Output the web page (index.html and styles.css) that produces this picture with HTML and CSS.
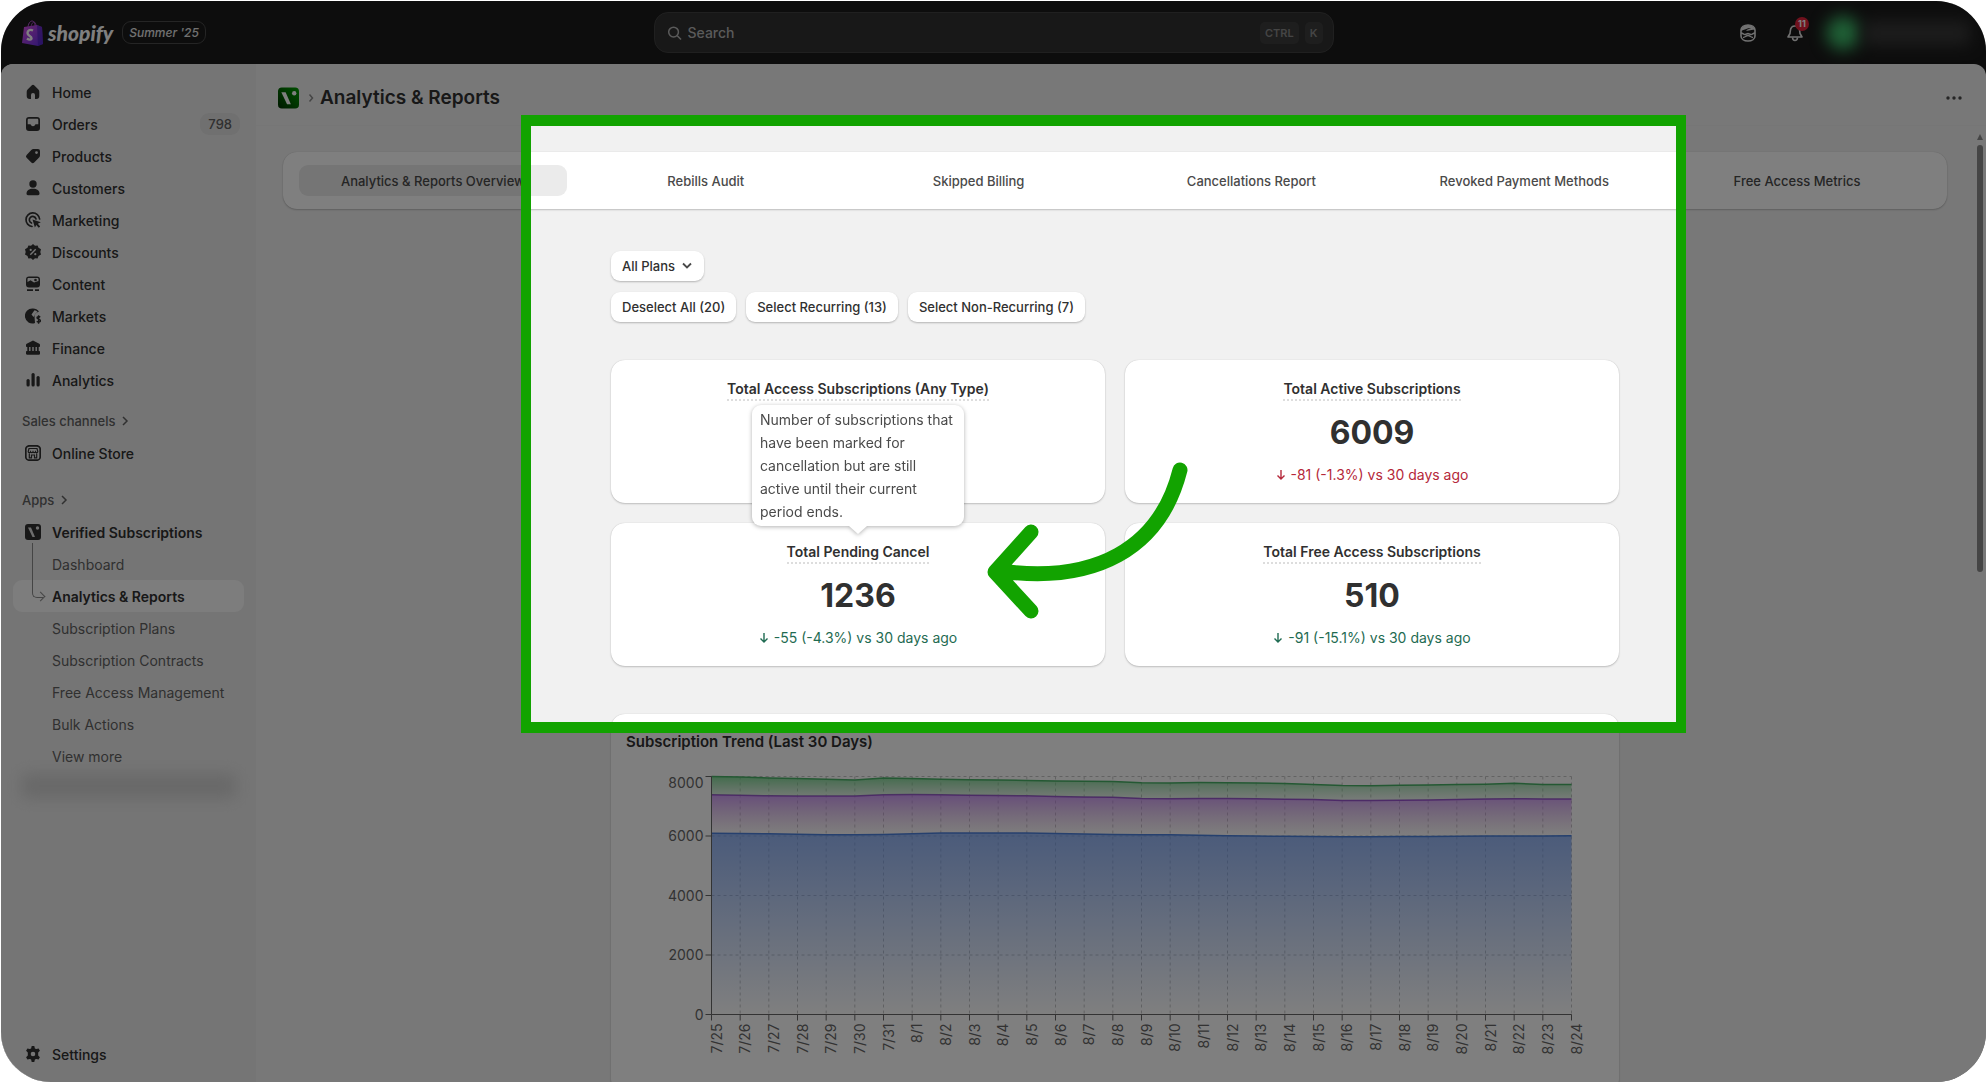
FILE: index.html
```html
<!DOCTYPE html>
<html lang="en">
<head>
  <meta charset="UTF-8">
  <meta name="viewport" content="width=device-width, initial-scale=1.0">
  <title>Analytics &amp; Reports</title>
  <link rel="stylesheet" href="styles.css">
</head>
<body>
  <div class="screen">
    <header class="topbar">
      <div class="brand">
        <svg class="bag" viewBox="0 0 21 26" aria-hidden="true">
          <defs>
            <linearGradient id="bag-fill" x1="0" y1="0" x2="1" y2="1">
              <stop offset="0" stop-color="#d94fe0"/>
              <stop offset="1" stop-color="#5a2be0"/>
            </linearGradient>
          </defs>
          <path d="M6 8C6 4 8 1 10 1s3 2 3 6M9 8c0-4 2-6 3-6s2 2 2 4" fill="none" stroke="#b04fd0" stroke-width="1"/>
          <path d="M2 7l13-2 5 2 1 17-5 2L0 23z" fill="url(#bag-fill)"/>
          <path d="M15 5l5 2 1 17-5 2z" fill="#4a22b8" opacity=".6"/>
          <path d="M11 10.500c-3-1.500-5.500 0-5.500 2.500 0 3 4 3 4 5.300 0 1.700-2.500 1.700-4.500.2" fill="none" stroke="#fff" stroke-width="2.400"/>
        </svg>
        <span class="wordmark">shopify</span>
        <span class="edition">Summer '25</span>
      </div>
      <label class="search">
        <svg viewBox="0 0 16 16" aria-hidden="true"><circle cx="7" cy="7" r="5.200"/><path d="M11 11l4 4"/></svg>
        <input type="text" placeholder="Search" aria-label="Search">
        <kbd>CTRL</kbd>
        <kbd>K</kbd>
      </label>
      <div class="tools">
        <button class="tool" aria-label="Sidekick">
          <svg viewBox="0 0 18 18" aria-hidden="true">
            <path d="M2 6c0-3 3-5 7-5s7 2 7 5v6c0 3-3 5-7 5s-7-2-7-5z" fill="none" stroke="#e3e3e3" stroke-width="1.600"/>
            <path d="M2 6c1-4 4-5 7-5s6 1 7 5c-4-1-6 1.500-9 .5C9 5 11 4.500 12 4 8 4 5 6 2 7z" fill="#e3e3e3"/>
            <path d="M2 9c2 0 2.500 1.500 4 1.500S8 9.500 9 9.500s1.500 1 3 1S14 9 16 9M4 13.500c2 0 3-2 5-2s3 2 5 2" fill="none" stroke="#e3e3e3" stroke-width="1.500"/>
          </svg>
        </button>
        <button class="tool bell" aria-label="Alerts">
          <svg viewBox="0 0 18 18" aria-hidden="true">
            <path d="M9 2C6 2 4.500 4 4.300 7L4 9.500 2 13h14l-2-3.500L13.700 7C13.500 4 12 2 9 2z" fill="none" stroke="#e3e3e3" stroke-width="1.600" stroke-linejoin="round"/>
            <path d="M6.500 13.500c.3 4 4.700 4 5 0" fill="none" stroke="#e3e3e3" stroke-width="1.600"/>
          </svg>
          <span class="alert-count">11</span>
        </button>
        <span class="avatar"></span>
        <span class="account"></span>
      </div>
    </header>

    <div class="layout">
      <nav class="sidebar">
        <ul>
          <li><a class="row" href="#"><svg viewBox="0 0 16 16"><path d="M6.600 1.400a2 2 0 0 1 2.800 0l4 4.200c.6.600.9 1.300.9 2.100V12a3 3 0 0 1-3 3H10v-4a2 2 0 0 0-4 0v4H4.700a3 3 0 0 1-3-3V7.700c0-.8.3-1.500.9-2.100z"/></svg>Home</a></li>
          <li><a class="row" href="#"><svg viewBox="0 0 16 16"><path fill-rule="evenodd" d="M4 1h8a3 3 0 0 1 3 3v8a3 3 0 0 1-3 3H4a3 3 0 0 1-3-3V4a3 3 0 0 1 3-3zm0 1.700c-.8 0-1.300.5-1.300 1.300v4.300h2.200c.8 0 .9.500 1.400 1.100.8 1 2.600 1 3.400 0 .5-.6.600-1.100 1.400-1.100h2.200V4c0-.8-.5-1.300-1.300-1.300z"/></svg>Orders<span class="count">798</span></a></li>
          <li><a class="row" href="#"><svg viewBox="0 0 16 16"><path fill-rule="evenodd" d="M8.500 1H13a2 2 0 0 1 2 2v4.200c0 .8-.3 1.600-.9 2.200l-4.900 5a2 2 0 0 1-2.900 0L1.600 9.800a2 2 0 0 1 0-2.800L6.300 2C6.900 1.300 7.700 1 8.500 1zM11.500 6a1.400 1.400 0 1 0 0-2.800 1.400 1.400 0 0 0 0 2.800z"/></svg>Products</a></li>
          <li><a class="row" href="#"><svg viewBox="0 0 16 16"><circle cx="8" cy="4" r="3.700"/><path d="M1.500 13.500c0-3 2.500-4.700 6.500-4.700s6.500 1.700 6.500 4.700c0 1.200-.6 1.700-1.500 1.700H3c-.9 0-1.500-.5-1.500-1.700z"/></svg>Customers</a></li>
          <li><a class="row" href="#"><svg viewBox="0 0 16 16"><path d="M7 14.500A6.800 6.800 0 1 1 14.600 7M6.500 11A3.400 3.400 0 1 1 11 7" fill="none" stroke="#303030" stroke-width="1.700" stroke-linecap="round"/><path d="M7.500 7.500l8.300 2.700-3 1.500 2.400 2.800-1.500 1.300-2.400-2.800-1.400 2.500z"/></svg>Marketing</a></li>
          <li><a class="row" href="#"><svg viewBox="0 0 16 16"><path d="M8 0l2 1.700 2.600-.3.900 2.400L16 5.200 15.300 8l.7 2.600-2.500 1.500-.9 2.400-2.600-.3L8 16l-2-1.800-2.600.3-.9-2.400L0 10.600.7 8 0 5.200l2.500-1.400.9-2.400 2.600.3z"/><path d="M5.300 10.700l5.400-5.400" stroke="#ebebeb" stroke-width="1.400"/><circle cx="5.700" cy="5.900" r="1.100" fill="#ebebeb"/><circle cx="10.300" cy="10.200" r="1.100" fill="#ebebeb"/></svg>Discounts</a></li>
          <li><a class="row" href="#"><svg viewBox="0 0 16 16"><path fill-rule="evenodd" d="M4 .5h8a3 3 0 0 1 3 3v5a3 3 0 0 1-3 3H4a3 3 0 0 1-3-3v-5a3 3 0 0 1 3-3zM3.500 2C2.800 2 2.500 2.500 2.500 3v3l3-1.800L9 6.500 13.500 5V3.200c0-.7-.5-1.200-1.200-1.200z"/><circle cx="10.500" cy="4" r="1.300"/><path d="M2 13.200h6v1.700H2zM10 13.200h4v1.700h-4z"/></svg>Content</a></li>
          <li><a class="row" href="#"><svg viewBox="0 0 16 16"><path fill-rule="evenodd" d="M8 .5c2.500 0 4.500 1 6 3l-2 1c-1.500 1-2.500 2.200-2.500 4L10 15A7.500 7.500 0 1 1 8 .5zM9.500 2.200L6.500 6.500 8.500 9l2-3.500 2-1.700c-.8-.8-1.800-1.400-3-1.600z"/><path d="M15.200 9.200c-1-1-3.200-.8-3.200.6 0 1.800 3.400 1 3.400 2.900 0 1.500-2.500 1.700-3.600.5M13.600 7.300v8.500" fill="none" stroke="#303030" stroke-width="1.400"/></svg>Markets</a></li>
          <li><a class="row" href="#"><svg viewBox="0 0 16 16"><path d="M8 .5l6.300 3.200c.5.300.7.700.7 1.200v1c0 .6-.4 1-1 1H2c-.6 0-1-.4-1-1v-1c0-.5.2-.9.700-1.200zM2.300 7h1.800v4H2.300zM5.500 7h1.800v4H5.500zM8.700 7h1.800v4H8.700zM11.900 7h1.800v4h-1.800zM2 11h12c.6 0 1 .4 1 1v1.500c0 .8-.4 1.200-1 1.200H2c-.6 0-1-.4-1-1.200V12c0-.6.400-1 1-1z"/></svg>Finance</a></li>
          <li><a class="row" href="#"><svg viewBox="0 0 16 16"><rect x="1.500" y="7" width="3.200" height="7.500" rx="1.500"/><rect x="6.500" y="1" width="3.200" height="13.500" rx="1.500"/><rect x="11.500" y="4" width="3.200" height="10.500" rx="1.500"/></svg>Analytics</a></li>
        </ul>

        <a class="section" href="#">Sales channels<svg viewBox="0 0 8 10"><path d="M2 1l4 4-4 4"/></svg></a>
        <ul>
          <li><a class="row" href="#"><svg viewBox="0 0 16 16"><rect x=".8" y=".8" width="14.400" height="14.400" rx="3.500" fill="none" stroke="#303030" stroke-width="1.700"/><path d="M4 3.500h8l.8 3c0 1.500-1.800 1.500-2.300.3-.5 1.200-2 1.200-2.500 0-.5 1.200-2 1.200-2.500 0-.5 1.200-2.300 1.200-2.300-.3zM4.300 8.500v4.300h2.200V10h3v2.800h2.200V8.500" fill="none" stroke="#303030" stroke-width="1.200"/></svg>Online Store</a></li>
        </ul>

        <a class="section apps" href="#">Apps<svg viewBox="0 0 8 10"><path d="M2 1l4 4-4 4"/></svg></a>
        <a class="row strong" href="#"><svg viewBox="0 0 16 16"><rect width="16" height="16" rx="3"/><path d="M3 3.500h3L10 13H7.500z" fill="#ddd"/><circle cx="12.500" cy="4" r="1.700" fill="#ddd"/></svg>Verified Subscriptions</a>
        <ul class="sub">
          <li><a class="row" href="#">Dashboard</a></li>
          <li><a class="row current" href="#">Analytics &amp; Reports</a></li>
          <li><a class="row" href="#">Subscription Plans</a></li>
          <li><a class="row" href="#">Subscription Contracts</a></li>
          <li><a class="row" href="#">Free Access Management</a></li>
          <li><a class="row" href="#">Bulk Actions</a></li>
          <li><a class="row" href="#">View more</a></li>
          <li class="redacted"></li>
        </ul>
        <a class="row settings" href="#"><svg viewBox="0 0 16 16"><path fill-rule="evenodd" d="M6.700 0h2.600l.6 2.400 1.300.7 2.400-.7 1.300 2.300-1.700 1.800v3l1.700 1.800-1.300 2.300-2.400-.7-1.300.7L9.300 16H6.700l-.6-2.400-1.300-.7-2.400.7-1.300-2.300 1.700-1.800v-3L1.100 4.700l1.300-2.300 2.400.7 1.300-.7zM8 10.300a2.300 2.300 0 1 0 0-4.600 2.300 2.300 0 0 0 0 4.600z"/></svg>Settings</a>
      </nav>

      <main class="main">
        <div class="page-head">
          <svg class="app-icon" viewBox="0 0 22 22" aria-hidden="true">
            <defs><linearGradient id="app-fill" x1="0" y1="1" x2="1" y2="0"><stop offset="0" stop-color="#003000"/><stop offset="1" stop-color="#00a000"/></linearGradient></defs>
            <rect width="22" height="22" rx="4" fill="url(#app-fill)"/>
            <path d="M3.500 5h4.500l5.500 12.500h-4z" fill="#fff"/><circle cx="17" cy="6" r="2.300" fill="#fff"/>
          </svg>
          <svg class="crumb" viewBox="0 0 6 10" aria-hidden="true"><path d="M1.500 1.500L4.500 5l-3 3.500"/></svg>
          <h1>Analytics &amp; Reports</h1>
          <button class="more" aria-label="More actions"><svg viewBox="0 0 16 4"><circle cx="2" cy="2" r="1.700"/><circle cx="8" cy="2" r="1.700"/><circle cx="14" cy="2" r="1.700"/></svg></button>
        </div>

        <div class="scroller">
          <div class="scroll-content">
            <div class="tabs" role="tablist">
              <button class="tab selected" role="tab">Analytics &amp; Reports Overview</button>
              <button class="tab" role="tab">Rebills Audit</button>
              <button class="tab" role="tab">Skipped Billing</button>
              <button class="tab" role="tab">Cancellations Report</button>
              <button class="tab" role="tab">Revoked Payment Methods</button>
              <button class="tab" role="tab">Free Access Metrics</button>
            </div>

            <div class="report">
              <div class="filters">
                <button class="btn">All Plans<svg viewBox="0 0 12 8"><path d="M2 1.500l4 4 4-4"/></svg></button>
              </div>
              <div class="filters">
                <button class="btn">Deselect All (20)</button>
                <button class="btn">Select Recurring (13)</button>
                <button class="btn">Select Non-Recurring (7)</button>
              </div>

              <div class="metrics">
                <section class="card metric">
                  <h2>Total Access Subscriptions (Any Type)</h2>
                </section>
                <section class="card metric">
                  <h2>Total Active Subscriptions</h2>
                  <p class="value">6009</p>
                  <p class="delta bad"><svg viewBox="0 0 10 12"><path d="M5 1v9M1.500 6.500L5 10l3.500-3.500"/></svg>-81 (-1.3%) vs 30 days ago</p>
                </section>
                <section class="card metric">
                  <h2>Total Pending Cancel
                    <span class="tooltip" role="tooltip">Number of subscriptions that have been marked for cancellation but are still active until their current period ends.</span>
                  </h2>
                  <p class="value">1236</p>
                  <p class="delta good"><svg viewBox="0 0 10 12"><path d="M5 1v9M1.500 6.500L5 10l3.500-3.500"/></svg>-55 (-4.3%) vs 30 days ago</p>
                </section>
                <section class="card metric">
                  <h2>Total Free Access Subscriptions</h2>
                  <p class="value">510</p>
                  <p class="delta good"><svg viewBox="0 0 10 12"><path d="M5 1v9M1.500 6.500L5 10l3.500-3.500"/></svg>-91 (-15.1%) vs 30 days ago</p>
                </section>
              </div>

              <section class="card trend">
                <h2>Subscription Trend (Last 30 Days)</h2>
                <svg id="chart" viewBox="0 0 1008 340">
                  <defs>
                    <linearGradient id="fill-active" x1="0" y1="0" x2="0" y2="1"><stop offset="0" stop-color="#5d8ff0" stop-opacity=".65"/><stop offset="1" stop-color="#5d8ff0" stop-opacity="0"/></linearGradient>
                    <linearGradient id="fill-pending" x1="0" y1="0" x2="0" y2="1"><stop offset="0" stop-color="#b466f0" stop-opacity=".65"/><stop offset="1" stop-color="#c88fc8" stop-opacity="0"/></linearGradient>
                    <linearGradient id="fill-free" x1="0" y1="0" x2="0" y2="1"><stop offset="0" stop-color="#4fc76b" stop-opacity=".7"/><stop offset="1" stop-color="#7fc78f" stop-opacity=".1"/></linearGradient>
                  </defs>
                </svg>
              </section>
            </div>
          </div>
          <div class="scrollbar"><span class="up"></span><span class="thumb"></span></div>
        </div>
      </main>
    </div>

    <div class="spotlight"></div>
    <svg class="pointer" viewBox="0 0 210 160" aria-hidden="true">
      <path d="M200 11C180 90 115 125 20 112M51 73L15 113l36 39"/>
    </svg>
  </div>
  <script src="chart.js"></script>
</body>
</html>
```
FILE: styles.css
```css
* {
  box-sizing: border-box;
}
body {
  margin: 0;
  height: 100vh;
  padding: 1px 0 0 1px;
  overflow: hidden;
  background: #fff;
  color: #303030;
  font-family: Inter, "Liberation Sans", sans-serif;
  font-size: 14px;
}
h1, h2, p, ul {
  margin: 0;
  padding: 0;
}
ul {
  list-style: none;
}
a {
  color: inherit;
  text-decoration: none;
}
button {
  border: 0;
  background: none;
  color: inherit;
  font: inherit;
  padding: 0;
}
.screen {
  position: relative;
  display: flex;
  flex-direction: column;
  height: 100%;
  border-radius: 50px;
  overflow: hidden;
  background: #1a1a1a;
}

/* top bar */
.topbar {
  display: grid;
  grid-template-columns: 1fr 680px 1fr;
  align-items: center;
  height: 63px;
}
.brand {
  display: flex;
  align-items: center;
  padding-left: 21px;
}
.bag {
  width: 21px;
  height: 26px;
}
.wordmark {
  margin: 0 9px 0 5px;
  color: #fff;
  font: italic 900 21px/26px Lato, sans-serif;
}
.edition {
  padding: 0 6px;
  border: 1px solid #4a4a4a;
  border-radius: 9px;
  color: #e3e3e3;
  font-size: 12px;
  font-style: italic;
  font-weight: 500;
  line-height: 21px;
}
.search {
  display: flex;
  align-items: center;
  gap: 6px;
  height: 41px;
  padding: 0 10px 0 12px;
  border: 1px solid #414141;
  border-radius: 14px;
  background: #303030;
}
.search svg {
  width: 15px;
  height: 16px;
  fill: none;
  stroke: #b5b5b5;
  stroke-width: 1.6;
}
.search input {
  flex: 1;
  border: 0;
  padding: 0;
  background: none;
  color: #b5b5b5;
  font: 500 14px Inter, sans-serif;
}
.search input::placeholder {
  color: #b5b5b5;
}
.search kbd {
  padding: 0 5px;
  border-radius: 5px;
  background: #3d3d3d;
  color: #8a8a8a;
  font: 600 11px/22px Inter, sans-serif;
}
.tools {
  display: flex;
  align-items: center;
  justify-content: flex-end;
  padding-right: 16px;
}
.tool {
  position: relative;
  margin-right: 29px;
}
.tool.bell {
  margin-right: 22px;
}
.tool svg {
  display: block;
  width: 18px;
  height: 18px;
}
.alert-count {
  position: absolute;
  left: 9px;
  top: -7px;
  width: 14px;
  border-radius: 7px;
  background: #e0233a;
  color: #fff;
  font-size: 9px;
  font-weight: 700;
  line-height: 14px;
}
.avatar {
  width: 34px;
  height: 34px;
  margin-right: 4px;
  background: #3fc06c;
  border-radius: 17px;
  filter: blur(8px);
}
.account {
  width: 106px;
  height: 24px;
  background: #3a3a3a;
  filter: blur(8px);
}

/* sidebar */
.layout {
  display: flex;
  flex: 1;
  min-height: 0;
  border-radius: 12px 12px 0 0;
  overflow: hidden;
  background: #f1f1f1;
}
.sidebar {
  display: flex;
  flex-direction: column;
  width: 255px;
  padding: 12px;
  background: #ebebeb;
}
.row {
  display: flex;
  align-items: center;
  gap: 11px;
  height: 32px;
  padding-left: 12px;
  border-radius: 9px;
  font-weight: 500;
}
.row svg {
  width: 16px;
  height: 16px;
  fill: #303030;
}
.count {
  margin-left: auto;
  margin-right: 4px;
  padding: 0 8px;
  border-radius: 9px;
  background: #e0e0e0;
  color: #616161;
  font-size: 13px;
  line-height: 22px;
}
.section {
  display: flex;
  align-items: center;
  gap: 6px;
  height: 32px;
  margin-top: 9px;
  padding-left: 9px;
  color: #616161;
  font-size: 13px;
  font-weight: 500;
}
.section.apps {
  margin-top: 15px;
}
.section svg {
  width: 8px;
  height: 10px;
  fill: none;
  stroke: #616161;
  stroke-width: 1.5;
}
.row.strong {
  font-weight: 600;
}
.sub {
  position: relative;
}
.sub .row {
  padding-left: 39px;
  color: #616161;
  font-weight: 400;
}
.sub .current {
  background: #fafafa;
  color: #303030;
  font-weight: 600;
}
/* branch from the app icon to the current page */
.sub::before {
  content: "";
  position: absolute;
  left: 19px;
  top: -5px;
  width: 10px;
  height: 54px;
  border: solid #8a8a8a;
  border-width: 0 0 1px 1px;
  border-radius: 0 0 0 5px;
}
.sub::after {
  content: "";
  position: absolute;
  left: 24px;
  top: 45px;
  width: 6px;
  height: 6px;
  border: solid #8a8a8a;
  border-width: 1px 1px 0 0;
  transform: rotate(45deg);
}
.redacted {
  height: 24px;
  margin: 2px 8px;
  background: #d0d0d0;
  filter: blur(8px);
}
.settings {
  margin-top: auto;
}

/* main column */
.main {
  display: flex;
  flex: 1;
  flex-direction: column;
  min-width: 0;
}
.page-head {
  display: flex;
  align-items: center;
  height: 62px;
  padding: 6px 24px 0 22px;
  border-bottom: 1px solid #ededed;
}
.app-icon {
  width: 21px;
  height: 22px;
}
.crumb {
  width: 6px;
  height: 10px;
  margin: 0 6px 0 9px;
  fill: none;
  stroke: #8a8a8a;
  stroke-width: 1.5;
}
h1 {
  font-size: 19px;
  font-weight: 600;
}
.more {
  margin-left: auto;
}
.more svg {
  display: block;
  width: 16px;
  height: 4px;
  fill: #4a4a4a;
}
.scroller {
  display: flex;
  flex: 1;
  min-height: 0;
  overflow: hidden;
}
.scroll-content {
  flex: 1;
  padding: 26px 27px;
}
.scrollbar {
  display: flex;
  flex-direction: column;
  align-items: center;
  gap: 5px;
  width: 12px;
  padding-top: 8px;
}
.up {
  border: solid transparent;
  border-width: 0 3px 6px;
  border-bottom-color: #8a8a8a;
}
.thumb {
  width: 6px;
  height: 427px;
  border-radius: 3px;
  background: #8a8a8a;
}
.card, .tabs {
  background: #fff;
  border-radius: 14px;
  box-shadow: 0 1px 2px rgba(0, 0, 0, .2), 0 0 1px rgba(0, 0, 0, .2);
}
.tabs {
  display: grid;
  grid-template-columns: repeat(6, 1fr);
  gap: 5px;
  padding: 13px 16px;
}
.tab {
  height: 31px;
  border-radius: 9px;
  color: #4a4a4a;
  font-size: 13px;
  font-weight: 500;
}
.tab.selected {
  background: #ebebeb;
}
.report {
  max-width: 1008px;
  margin: 42px auto 0;
}
.filters {
  display: flex;
  gap: 10px;
  margin-bottom: 11px;
}
.btn {
  display: flex;
  align-items: center;
  gap: 6px;
  height: 30px;
  padding: 0 11px;
  border-radius: 9px;
  background: #fff;
  box-shadow: 0 1px 2px rgba(0, 0, 0, .25);
  font-size: 13px;
  font-weight: 500;
}
.btn svg {
  width: 12px;
  height: 8px;
  fill: none;
  stroke: #4a4a4a;
  stroke-width: 1.8;
}
.metrics {
  display: grid;
  grid-template-columns: 1fr 1fr;
  gap: 20px;
  margin: 38px 0 48px;
}
.metric {
  display: flex;
  flex-direction: column;
  align-items: center;
  gap: 9px;
  padding: 19px 16px 17px;
}
h2 {
  font-size: 14px;
  font-weight: 600;
  line-height: 22px;
}
.metric h2 {
  position: relative;
  border-bottom: 2px dotted #ddd;
  line-height: 20px;
}
.value {
  font-size: 32px;
  font-weight: 700;
  line-height: 45px;
}
.delta {
  display: flex;
  align-items: center;
  gap: 5px;
  font-weight: 400;
  line-height: 22px;
}
.delta svg {
  width: 10px;
  height: 12px;
  fill: none;
  stroke: currentColor;
  stroke-width: 1.4;
}
.good {
  color: #1f6b52;
}
.bad {
  color: #b5283a;
}
.tooltip {
  position: absolute;
  left: 50%;
  bottom: calc(100% + 16px);
  width: 212px;
  margin-left: -106px;
  padding: 3px 8px;
  border-radius: 9px;
  background: #fff;
  filter: drop-shadow(0 1px 2px rgba(0, 0, 0, .3));
  color: #4a4a4a;
  font-weight: 400;
  line-height: 23px;
}
.tooltip::after {
  content: "";
  position: absolute;
  left: 50%;
  top: 100%;
  margin-left: -9px;
  border: solid transparent;
  border-width: 8px 9px 0;
  border-top-color: #fff;
}
.trend {
  padding-top: 17px;
}
.trend h2 {
  padding-left: 15px;
  font-size: 15px;
}
#chart {
  display: block;
  width: 100%;
}
#chart text {
  fill: #666;
  font-size: 14px;
}
.grid {
  stroke: #c4c4c4;
  stroke-dasharray: 3 3;
}
.axis {
  stroke: #666;
}

/* dimmed surroundings with a framed area */
.spotlight {
  position: absolute;
  left: 520px;
  right: 300px;
  top: 114px;
  height: 618px;
  border: solid #12a300;
  border-width: 11px 10px;
  box-shadow: 0 0 0 2000px rgba(0, 0, 0, .5);
}
.pointer {
  position: absolute;
  left: 979px;
  top: 458px;
  width: 210px;
  height: 160px;
  fill: none;
  stroke: #12a300;
  stroke-width: 15;
  stroke-linecap: round;
  stroke-linejoin: round;
}
```
FILE: chart.js
```js
const chart = document.getElementById("chart");
const left = 100.5;
const right = 960.5;
const topY = 23.5;
const bottomY = 261.5;
const days = 31;
const step = (right - left) / (days - 1);

// running totals per day, each series stacked on the one before
const active = [6090, 6085, 6075, 6060, 6045, 6045, 6050, 6075, 6100, 6100, 6100, 6100, 6085, 6070, 6050, 6040, 6040, 6025, 6010, 6000, 5990, 5980, 5975, 5975, 5980, 5985, 5990, 5995, 6000, 6000, 6009];
const pending = [7385, 7370, 7350, 7345, 7340, 7340, 7385, 7390, 7385, 7370, 7360, 7350, 7325, 7310, 7300, 7260, 7250, 7260, 7260, 7250, 7235, 7225, 7195, 7190, 7205, 7215, 7230, 7240, 7255, 7240, 7245];
const free = [7995, 7980, 7950, 7930, 7910, 7880, 7950, 7930, 7910, 7890, 7885, 7870, 7850, 7840, 7830, 7790, 7780, 7795, 7790, 7780, 7765, 7735, 7700, 7690, 7705, 7715, 7730, 7740, 7770, 7735, 7735];

function add(name, attrs, text) {
  const el = document.createElementNS("http://www.w3.org/2000/svg", name);
  for (const key in attrs) {
    el.setAttribute(key, attrs[key]);
  }
  if (text !== undefined) {
    el.textContent = text;
  }
  chart.appendChild(el);
}

function x(i) {
  return left + i * step;
}

function y(value) {
  return bottomY - value / 8000 * (bottomY - topY);
}

function points(values) {
  return values.map((v, i) => `${x(i).toFixed(1)},${y(v).toFixed(1)}`);
}

function drawArea(values, base, fill, stroke) {
  const line = points(values);
  const floor = points(base).reverse();
  add("polygon", { points: line.concat(floor).join(" "), fill: `url(#${fill})` });
  add("polyline", { points: line.join(" "), fill: "none", stroke: stroke, "stroke-width": 1.5 });
}

for (let v = 0; v <= 8000; v += 2000) {
  add("line", { class: "grid", x1: left, x2: right, y1: y(v), y2: y(v) });
}
for (let i = 0; i < days; i++) {
  add("line", { class: "grid", x1: x(i), x2: x(i), y1: topY, y2: bottomY });
}

drawArea(active, active.map(() => 0), "fill-active", "#4a80dc");
drawArea(pending, active, "fill-pending", "#9a50d0");
drawArea(free, pending, "fill-free", "#48b066");

add("line", { class: "axis", x1: left, x2: left, y1: topY, y2: bottomY });
add("line", { class: "axis", x1: left, x2: right, y1: bottomY, y2: bottomY });

for (let v = 0; v <= 8000; v += 2000) {
  const labelY = Math.max(y(v), 30);
  add("line", { class: "axis", x1: left - 6, x2: left, y1: y(v), y2: y(v) });
  add("text", { x: left - 8, y: labelY + 5, "text-anchor": "end" }, v);
}
for (let i = 0; i < days; i++) {
  const date = i < 7 ? `7/${25 + i}` : `8/${i - 6}`;
  add("line", { class: "axis", x1: x(i), x2: x(i), y1: bottomY, y2: bottomY + 6 });
  add("text", { transform: `translate(${x(i) + 10} ${bottomY + 9}) rotate(-90)`, "text-anchor": "end" }, date);
}
```
